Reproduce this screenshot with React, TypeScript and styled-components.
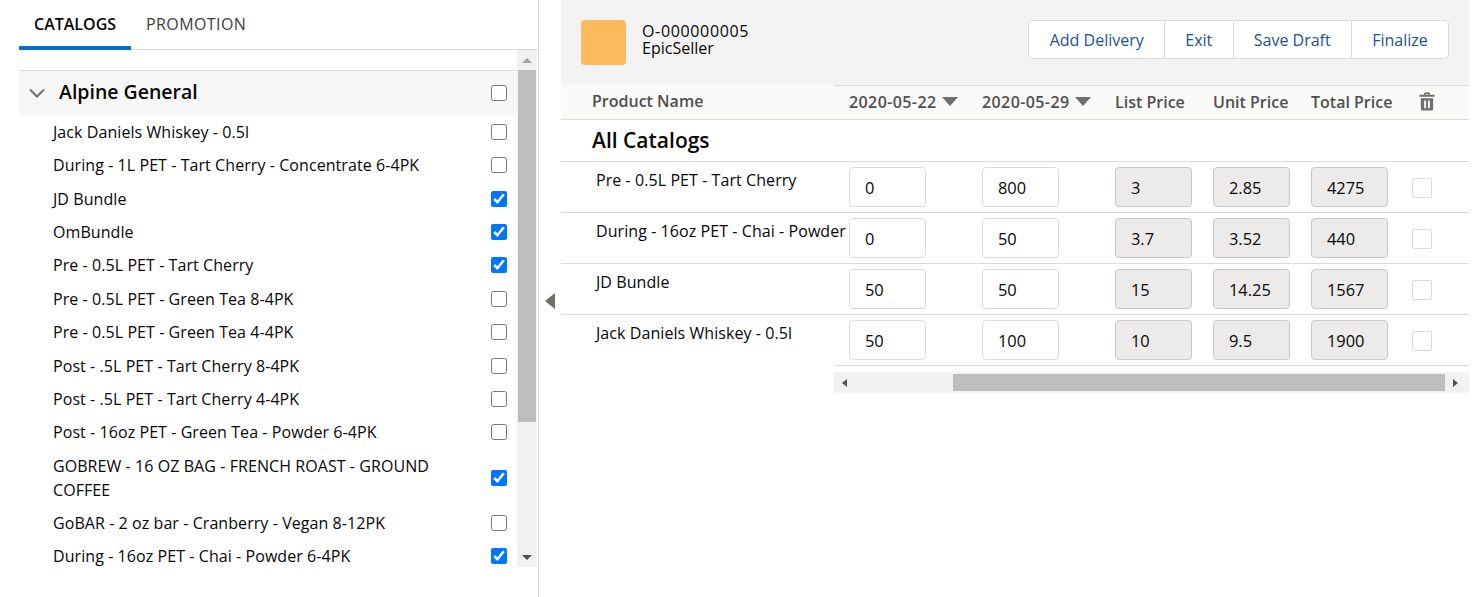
import styled, { createGlobalStyle } from "styled-components";

type Product = { name: string; checked?: boolean };
type Line = { name: string; first: string; second: string; list: string; unit: string; total: string };

const PRODUCTS: Product[] = [
  { name: "Jack Daniels Whiskey - 0.5l" },
  { name: "During - 1L PET - Tart Cherry - Concentrate 6-4PK" },
  { name: "JD Bundle", checked: true },
  { name: "OmBundle", checked: true },
  { name: "Pre - 0.5L PET - Tart Cherry", checked: true },
  { name: "Pre - 0.5L PET - Green Tea 8-4PK" },
  { name: "Pre - 0.5L PET - Green Tea 4-4PK" },
  { name: "Post - .5L PET - Tart Cherry 8-4PK" },
  { name: "Post - .5L PET - Tart Cherry 4-4PK" },
  { name: "Post - 16oz PET - Green Tea - Powder 6-4PK" },
  { name: "GOBREW - 16 OZ BAG - FRENCH ROAST - GROUND COFFEE", checked: true },
  { name: "GoBAR - 2 oz bar - Cranberry - Vegan 8-12PK" },
  { name: "During - 16oz PET - Chai - Powder 6-4PK", checked: true },
];

const LINES: Line[] = [
  { name: "Pre - 0.5L PET - Tart Cherry", first: "0", second: "800", list: "3", unit: "2.85", total: "4275" },
  { name: "During - 16oz PET - Chai - Powder 6-4PK", first: "0", second: "50", list: "3.7", unit: "3.52", total: "440" },
  { name: "JD Bundle", first: "50", second: "50", list: "15", unit: "14.25", total: "1567" },
  { name: "Jack Daniels Whiskey - 0.5l", first: "50", second: "100", list: "10", unit: "9.5", total: "1900" },
];

const GlobalStyle = createGlobalStyle`
  html, body {
    margin: 0;
    background: #fff;
    overflow: hidden;
  }
  body {
    font-family: "Open Sans", "Noto Sans", sans-serif;
    font-size: 16px;
    color: #080707;
  }
`;

const Page = styled.div`
  display: flex;
  width: 1472px;
  height: 597px;
`;

const Sidebar = styled.aside`
  width: 538px;
  flex: none;
  padding-left: 19px;
  box-sizing: border-box;
  display: flex;
  flex-direction: column;
`;

const Tabs = styled.div`
  height: 50px;
  flex: none;
  display: flex;
  box-sizing: border-box;
  border-bottom: 1px solid #dddbda;
`;

const Tab = styled.div<{ $active?: boolean }>`
  height: 50px;
  box-sizing: border-box;
  padding: 14px 15px 0;
  line-height: 20px;
  letter-spacing: ${(p) => (p.$active ? "0" : "0.4px")};
  font-weight: ${(p) => (p.$active ? 600 : 400)};
  color: ${(p) => (p.$active ? "#080707" : "#3e3e3c")};
  border-bottom: 4px solid ${(p) => (p.$active ? "#0070d2" : "transparent")};
`;

const ListWrap = styled.div`
  height: 517px;
  flex: none;
  display: flex;
`;

const List = styled.div`
  width: 498px;
  flex: none;
  padding-top: 20px;
  box-sizing: border-box;
`;

const Group = styled.div`
  height: 45.2px;
  box-sizing: border-box;
  display: flex;
  align-items: center;
  background: #f7f7f7;
  border-top: 1px solid #dddbda;
  padding-left: 10px;
`;

const GroupName = styled.div`
  flex: 1;
  margin: -3px 0 0 14px;
  font-size: 19.5px;
  font-weight: 600;
  color: #080707;
`;

const Item = styled.label`
  display: flex;
  align-items: center;
  padding: 4.7px 0 4.7px 34px;
`;

const ItemName = styled.span`
  flex: 1;
  line-height: 24px;
  letter-spacing: 0.07px;
  padding-right: 30px;
`;

const Check = styled.input.attrs({ type: "checkbox" })`
  width: 16px;
  height: 16px;
  margin: 0 10px 0 0;
  flex: none;
`;

const VTrack = styled.div`
  width: 20px;
  flex: none;
  background: #f1f1f1;
  display: flex;
  flex-direction: column;
`;

const VArrow = styled.div`
  height: 20px;
  flex: none;
  display: flex;
  align-items: center;
  justify-content: center;
`;

const VThumb = styled.div`
  height: 352px;
  flex: none;
  background: #bdbdbd;
  margin: 0 1px 125px;
`;

const Arrow = styled.i<{ $dir: "up" | "down" | "left" | "right"; $off?: boolean }>`
  width: 0;
  height: 0;
  border-style: solid;
  border-color: transparent;
  ${(p) =>
    p.$dir === "up"
      ? `border-width: 0 5px 5px; border-bottom-color: ${p.$off ? "#a3a3a3" : "#505050"};`
      : p.$dir === "down"
        ? "border-width: 5px 5px 0; border-top-color: #505050;"
        : p.$dir === "left"
          ? "border-width: 4px 5px 4px 0; border-right-color: #505050;"
          : "border-width: 4px 0 4px 5px; border-left-color: #505050;"}
`;

const Divider = styled.div`
  width: 23px;
  flex: none;
  border-left: 1px solid #dddbda;
  box-sizing: border-box;
  display: flex;
  align-items: center;
  padding: 4px 0 0 6px;
`;

const CollapseArrow = styled.i`
  width: 0;
  height: 0;
  border-style: solid;
  border-color: transparent #706e6b transparent transparent;
  border-width: 8px 10px 8px 0;
`;

const Main = styled.main`
  width: 908px;
  flex: none;
`;

const Header = styled.header`
  height: 85px;
  box-sizing: border-box;
  background: #f3f3f3;
  border-radius: 0 0 4px 4px;
  display: flex;
  align-items: flex-start;
  padding: 20px 20px 0;
`;

const Avatar = styled.div`
  width: 45px;
  height: 45px;
  border-radius: 4px;
  background: #fdb95e;
  flex: none;
`;

const Title = styled.div`
  flex: 1;
  margin: 3px 0 0 16px;
  line-height: 16.5px;
`;

const OrderNumber = styled.div`
  letter-spacing: 0.65px;
`;

const ButtonGroup = styled.div`
  display: flex;
  height: 39px;
  background: #fff;
  border: 1px solid #dddbda;
  border-radius: 4px;
  box-sizing: border-box;
`;

const Button = styled.button`
  font: inherit;
  color: #1b5297;
  background: none;
  border: 0;
  padding: 0 20.25px;
  border-left: 1px solid #dddbda;

  &:first-child {
    border-left: 0;
  }
`;

const Table = styled.div`
  display: flex;
`;

const Frozen = styled.div`
  width: 273px;
  flex: none;
`;

const Scroller = styled.div`
  flex: 1;
  min-width: 0;
`;

const HeadLeft = styled.div`
  height: 35px;
  box-sizing: border-box;
  background: #fafaf9;
  border-bottom: 1px solid #dddbda;
  padding: 5px 0 0 31px;
  line-height: 22px;
  font-weight: 600;
  color: #514f4d;
`;

const CatalogTitle = styled.div`
  height: 42px;
  box-sizing: border-box;
  border-bottom: 1px solid #dddbda;
  padding-left: 31px;
  font-size: 21px;
  font-weight: 600;
  line-height: 41px;
`;

const NameCell = styled.div`
  width: 287px;
  height: 51px;
  box-sizing: border-box;
  padding: 7px 0 0 35px;
  line-height: 22px;
  letter-spacing: 0.07px;
  white-space: nowrap;
  overflow: hidden;
  position: relative;

  &::after {
    content: "";
    position: absolute;
    left: 0;
    bottom: 0;
    width: 273px;
    height: 1px;
    background: #dddbda;
  }
`;

const LastName = styled(NameCell)`
  &::after {
    display: none;
  }
`;

const COLUMNS = "133px 133px 98px 98px 98px 37px";

const HeadRow = styled.div`
  height: 35px;
  box-sizing: border-box;
  background: #fafaf9;
  border-top: 1px solid #dddbda;
  border-bottom: 1px solid #dddbda;
  display: grid;
  grid-template-columns: ${COLUMNS};
  padding: 0 0 2px 15px;
  align-items: center;
  font-weight: 600;
  color: #514f4d;
`;

const HeadCell = styled.div`
  display: flex;
  align-items: center;
  gap: 6px;
  white-space: nowrap;
`;

const DateLabel = styled.span`
  letter-spacing: 0.4px;
`;

const TrashCell = styled(HeadCell)`
  padding-left: 10px;
`;

const SortArrow = styled.i`
  width: 0;
  height: 0;
  border-style: solid;
  border-color: #706e6b transparent transparent;
  border-width: 9px 8px 0;
`;

const Spacer = styled.div`
  height: 42px;
  box-sizing: border-box;
  border-bottom: 1px solid #dddbda;
`;

const Row = styled.div`
  height: 51px;
  box-sizing: border-box;
  border-bottom: 1px solid #dddbda;
  display: grid;
  grid-template-columns: ${COLUMNS};
  padding: 5px 0 0 15px;
`;

const Field = styled.input<{ $readOnly?: boolean }>`
  width: 77px;
  height: 40px;
  box-sizing: border-box;
  padding: 0 18px 0 15px;
  font: inherit;
  font-size: 16.4px;
  color: #080707;
  border-radius: 4px;
  border: 1px solid ${(p) => (p.$readOnly ? "#c9c7c5" : "#dddbda")};
  background: ${(p) => (p.$readOnly ? "#ecebea" : "#fff")};
  outline: none;
`;

const RowCheck = styled.span`
  width: 20px;
  height: 20px;
  box-sizing: border-box;
  margin: 11px 0 0 3px;
  border: 1px solid #dddbda;
  border-radius: 2px;
  background: #fff;
`;

const HScroll = styled.div`
  height: 21px;
  margin-top: 6px;
  background: #f1f1f1;
  display: flex;
  align-items: center;
`;

const HArrow = styled.div`
  width: 20px;
  flex: none;
  display: flex;
  justify-content: center;
`;

const HThumb = styled.div`
  height: 17px;
  width: 492px;
  margin-left: 99px;
  background: #bdbdbd;
`;

function TrashIcon() {
  return (
    <svg width="16" height="19" viewBox="1 0 16 20" fill="#706e6b" aria-hidden="true">
      <path d="M6 1.500C6 .9 6.500.5 7 .5h4c.5 0 1 .4 1 1V3h4.500c.3 0 .5.2.5.5V5H1V3.500C1 3.200 1.200 3 1.500 3H6V1.500zM7.500 2v1h3V2h-3z" />
      <path d="M2.500 6.500h13V18c0 .8-.7 1.500-1.500 1.500H4c-.8 0-1.500-.7-1.500-1.500V6.500zM6 9v8h2V9H6zm4 0v8h2V9h-2z" fillRule="evenodd" />
    </svg>
  );
}

function ChevronDown() {
  return (
    <svg width="16" height="10" viewBox="0 0 16 10" fill="none" stroke="#706e6b" strokeWidth="2" aria-hidden="true">
      <path d="M1 1.500l7 7 7-7" />
    </svg>
  );
}

export default function App() {
  return (
    <Page>
      <GlobalStyle />
      <Sidebar>
        <Tabs>
          <Tab $active>CATALOGS</Tab>
          <Tab>PROMOTION</Tab>
        </Tabs>
        <ListWrap>
          <List>
            <Group>
              <ChevronDown />
              <GroupName>Alpine General</GroupName>
              <Check />
            </Group>
            {PRODUCTS.map((p) => (
              <Item key={p.name}>
                <ItemName>{p.name}</ItemName>
                <Check defaultChecked={p.checked} />
              </Item>
            ))}
          </List>
          <VTrack>
            <VArrow>
              <Arrow $dir="up" $off />
            </VArrow>
            <VThumb />
            <VArrow>
              <Arrow $dir="down" />
            </VArrow>
          </VTrack>
        </ListWrap>
      </Sidebar>
      <Divider>
        <CollapseArrow />
      </Divider>
      <Main>
        <Header>
          <Avatar />
          <Title>
            <OrderNumber>O-000000005</OrderNumber>
            EpicSeller
          </Title>
          <ButtonGroup>
            <Button>Add Delivery</Button>
            <Button>Exit</Button>
            <Button>Save Draft</Button>
            <Button>Finalize</Button>
          </ButtonGroup>
        </Header>
        <Table>
          <Frozen>
            <HeadLeft>Product Name</HeadLeft>
            <CatalogTitle>All Catalogs</CatalogTitle>
            {LINES.map((l, i) =>
              i === LINES.length - 1 ? (
                <LastName key={l.name}>{l.name}</LastName>
              ) : (
                <NameCell key={l.name}>{l.name}</NameCell>
              ),
            )}
          </Frozen>
          <Scroller>
            <HeadRow>
              <HeadCell>
                <DateLabel>2020-05-22</DateLabel>
                <SortArrow />
              </HeadCell>
              <HeadCell>
                <DateLabel>2020-05-29</DateLabel>
                <SortArrow />
              </HeadCell>
              <HeadCell>List Price</HeadCell>
              <HeadCell>Unit Price</HeadCell>
              <HeadCell>Total Price</HeadCell>
              <TrashCell>
                <TrashIcon />
              </TrashCell>
            </HeadRow>
            <Spacer />
            {LINES.map((l) => (
              <Row key={l.name}>
                <Field defaultValue={l.first} />
                <Field defaultValue={l.second} />
                <Field $readOnly readOnly value={l.list} />
                <Field $readOnly readOnly value={l.unit} />
                <Field $readOnly readOnly value={l.total} />
                <RowCheck />
              </Row>
            ))}
            <HScroll>
              <HArrow>
                <Arrow $dir="left" />
              </HArrow>
              <HThumb />
              <HArrow>
                <Arrow $dir="right" />
              </HArrow>
            </HScroll>
          </Scroller>
        </Table>
      </Main>
    </Page>
  );
}
